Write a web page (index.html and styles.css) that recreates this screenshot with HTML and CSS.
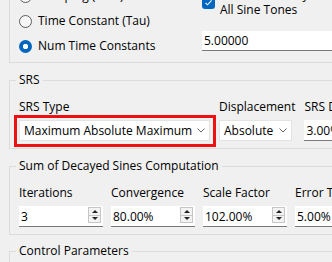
FILE: index.html
```html
<!DOCTYPE html>
<html lang="en">
<head>
  <meta charset="UTF-8" />
  <title>SRS Synthesis</title>
  <link rel="stylesheet" href="styles.css">
</head>
<body>

  <div class="group top">
    <div class="radios">
      <div class="radio"><span class="dot"></span>Damping (Zeta)</div>
      <div class="radio"><span class="dot"></span>Time Constant (Tau)</div>
      <div class="radio"><span class="dot on"></span>Num Time Constants</div>
    </div>
    <div class="side">
      <div class="check">
        <span class="box">
          <svg width="13" height="13" viewBox="0 0 13 13"><path d="M3.5 6.8 L5.5 8.8 L9.6 4.4" fill="none" stroke="#fff" stroke-width="1.1"/></svg>
        </span>
        <span>Common Decay for<br>All Sine Tones</span>
      </div>
      <div class="text num">5.00000</div>
    </div>
  </div>

  <fieldset class="group">
    <legend>SRS</legend>
    <div class="row">
      <div class="field">
        <div class="lbl">SRS Type</div>
        <div class="combo type">
          <span>Maximum Absolute Maximum</span>
          <svg width="8" height="5" viewBox="0 0 8 5"><path d="M0.5 0.5 L4 4 L7.5 0.5" fill="none" stroke="#6a6a6a"/></svg>
          <span class="mark"></span>
        </div>
      </div>
      <div class="field">
        <div class="lbl">Displacement</div>
        <div class="combo disp">
          <span>Absolute</span>
          <svg width="8" height="5" viewBox="0 0 8 5"><path d="M0.5 0.5 L4 4 L7.5 0.5" fill="none" stroke="#6a6a6a"/></svg>
        </div>
      </div>
      <div class="field">
        <div class="lbl">SRS Damping</div>
        <div class="text damp">3.00%</div>
      </div>
    </div>
  </fieldset>

  <fieldset class="group">
    <legend>Sum of Decayed Sines Computation</legend>
    <div class="row spins">
      <div class="field">
        <div class="lbl">Iterations</div>
        <div class="spin"><span class="val">3</span><span class="btns"><span class="up"></span><span class="down"></span></span></div>
      </div>
      <div class="field">
        <div class="lbl">Convergence</div>
        <div class="spin"><span class="val">80.00%</span><span class="btns"><span class="up"></span><span class="down"></span></span></div>
      </div>
      <div class="field">
        <div class="lbl">Scale Factor</div>
        <div class="spin"><span class="val">102.00%</span><span class="btns"><span class="up"></span><span class="down"></span></span></div>
      </div>
      <div class="field">
        <div class="lbl">Error Tolerance</div>
        <div class="spin"><span class="val">5.00%</span><span class="btns"><span class="up"></span><span class="down"></span></span></div>
      </div>
    </div>
  </fieldset>

  <fieldset class="group last">
    <legend>Control Parameters</legend>
  </fieldset>

</body>
</html>
```

FILE: styles.css
```css
body {
  margin: 0;
  background: #f0f0f0;
  font-family: 'Open Sans', 'Noto Sans', sans-serif;
  font-size: 12px;
  line-height: 15px;
  color: #000;
  overflow: hidden;
}

.group {
  border: 1px solid #dcdcdc;
  width: 420px;
  margin: 10px 0 0 9px;
  padding: 12px 0 7px 9px;
  min-width: 0;
}

legend {
  padding: 0 3px;
  margin-left: -3px;
  line-height: 14px;
}

/* top box, scrolled partly out of view */
.top {
  display: flex;
  margin-top: -12px;
  border-top: 0;
  padding: 0 0 9px 9px;
}

.radios {
  width: 183px;
  display: flex;
  flex-direction: column;
  gap: 10px;
}

.radio {
  display: flex;
  align-items: center;
  gap: 6px;
}

.dot {
  width: 13px;
  height: 13px;
  margin-top: 2px;
  box-sizing: border-box;
  border: 1px solid #5c5c5c;
  border-radius: 50%;
  background: #f7f7f7;
}

.dot.on {
  border: 0;
  background: radial-gradient(circle, #fff 0 2.4px, #0067c0 3px);
}

.side {
  margin-top: -1px;
  display: flex;
  flex-direction: column;
  gap: 14px;
}

.check {
  display: flex;
  align-items: center;
  gap: 5px;
}

.box {
  width: 13px;
  height: 13px;
  border-radius: 3px;
  background: #0067c0;
  display: flex;
}

.text {
  height: 20px;
  box-sizing: border-box;
  padding: 2px 2px 0;
  background: #fff;
  border-bottom: 1px solid #7a7a7a;
}

.text.num {
  width: 150px;
}

.row {
  display: flex;
  gap: 9px;
}

.lbl {
  margin-bottom: 6px;
  white-space: nowrap;
}

.combo {
  position: relative;
  height: 21px;
  box-sizing: border-box;
  border: 1px solid #e3e3e3;
  background: #fff;
  display: flex;
  align-items: center;
  justify-content: space-between;
  padding: 0 4px;
}

.combo.type {
  width: 191px;
}

.combo.disp {
  width: 73px;
}

.text.damp {
  width: 60px;
  height: 21px;
  padding-top: 3px;
}

/* red highlight frame */
.mark {
  position: absolute;
  top: -6px;
  left: -6px;
  right: -7px;
  bottom: -7px;
  border: 3px solid #ee1111;
}

.spins {
  gap: 8px;
}

.spin {
  width: 84px;
  height: 21px;
  box-sizing: border-box;
  background: #fff;
  border-bottom: 1px solid #7a7a7a;
  display: flex;
  justify-content: space-between;
  padding: 1px 2px 0 2px;
}

.val {
  padding-top: 2px;
}

.btns {
  width: 13px;
  height: 16px;
  display: flex;
  flex-direction: column;
}

.btns span {
  flex: 1;
  box-sizing: border-box;
  border: 1px solid #c6c6c6;
  background: #f3f3f3;
  display: flex;
  align-items: center;
  justify-content: center;
}

.btns .down {
  border-top: 0;
}

.btns span::after {
  content: "";
  border-left: 3px solid transparent;
  border-right: 3px solid transparent;
}

.btns .up::after {
  border-bottom: 3px solid #222;
}

.btns .down::after {
  border-top: 3px solid #222;
}

.last {
  margin-top: 9px;
  height: 40px;
}
```
